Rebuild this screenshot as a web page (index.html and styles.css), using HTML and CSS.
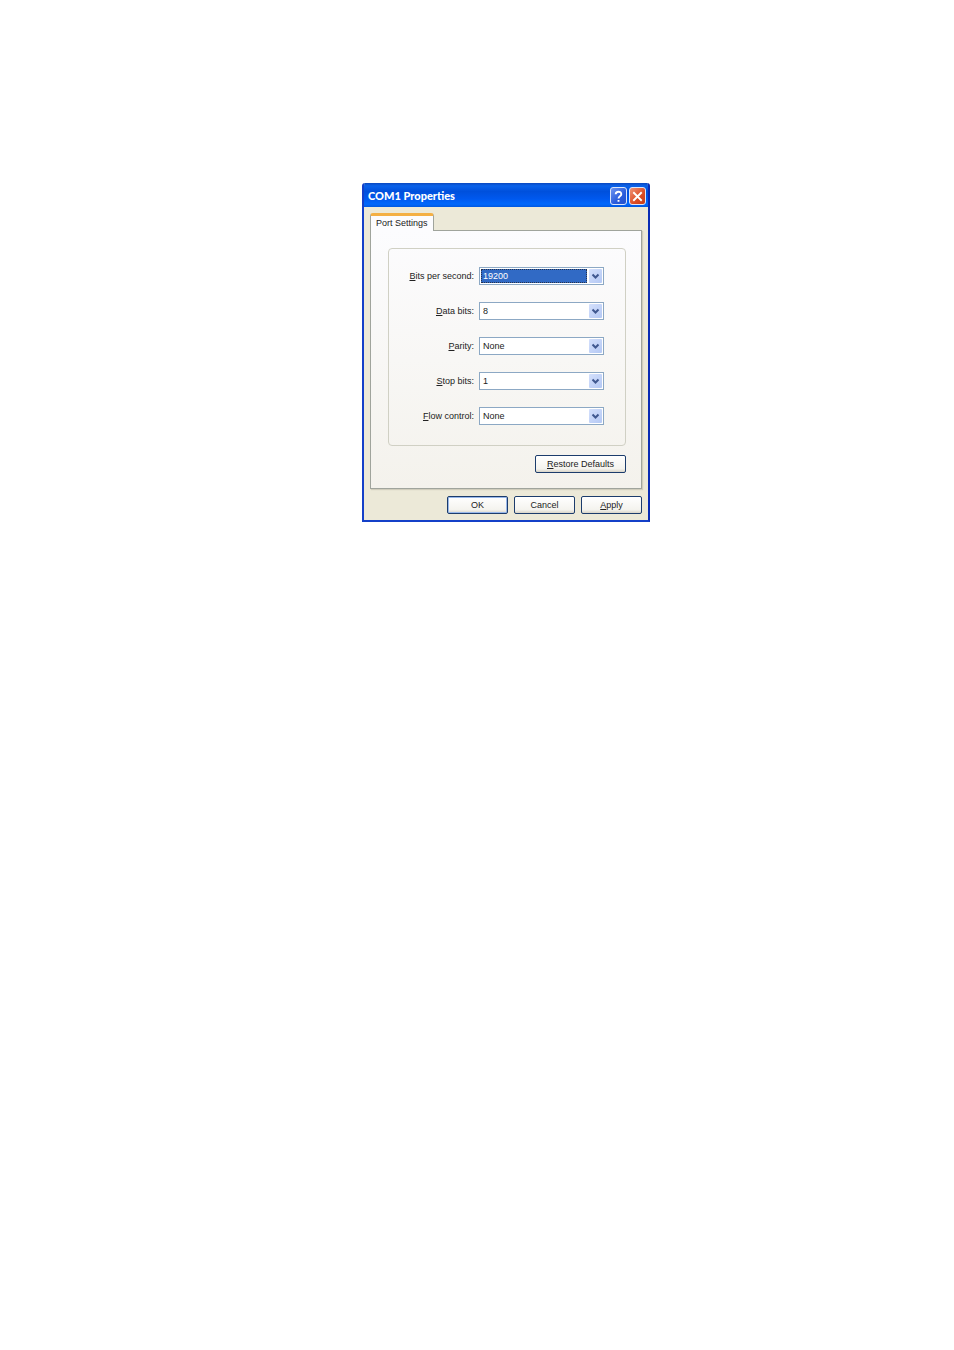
FILE: index.html
```html
<!DOCTYPE html>
<html lang="en">
<head>
  <meta charset="UTF-8" />
  <meta name="viewport" content="width=device-width, initial-scale=1.0" />
  <title>COM1 Properties</title>
  <link rel="stylesheet" href="styles.css">
</head>
<body>
  <form class="dialog">
    <header class="titlebar">
      <h1>COM1 Properties</h1>
      <button type="button" class="caption help" aria-label="Help">
        <svg viewBox="0 0 16 16"><path d="M5 5.6C5 2 11 2 11 5.5C11 7.8 8 7.6 8 10M8 11.6V13.6" /></svg>
      </button>
      <button type="button" class="caption close" aria-label="Close">
        <svg viewBox="0 0 16 16"><path d="M3.5 3.5L12.5 12.5M12.5 3.5L3.5 12.5" /></svg>
      </button>
    </header>

    <main class="content">
      <div class="tabs">
        <button type="button" class="tab">Port Settings</button>
      </div>

      <section class="panel">
        <div class="group">
          <label for="bits"><u>B</u>its per second:</label>
          <div class="combo active">
            <select id="bits"><option>19200</option></select>
            <svg class="arrow" viewBox="0 0 13 13"><path d="M3.5 5L6.5 8L9.5 5" /></svg>
          </div>

          <label for="data"><u>D</u>ata bits:</label>
          <div class="combo">
            <select id="data"><option>8</option></select>
            <svg class="arrow" viewBox="0 0 13 13"><path d="M3.5 5L6.5 8L9.5 5" /></svg>
          </div>

          <label for="parity"><u>P</u>arity:</label>
          <div class="combo">
            <select id="parity"><option>None</option></select>
            <svg class="arrow" viewBox="0 0 13 13"><path d="M3.5 5L6.5 8L9.5 5" /></svg>
          </div>

          <label for="stop"><u>S</u>top bits:</label>
          <div class="combo">
            <select id="stop"><option>1</option></select>
            <svg class="arrow" viewBox="0 0 13 13"><path d="M3.5 5L6.5 8L9.5 5" /></svg>
          </div>

          <label for="flow"><u>F</u>low control:</label>
          <div class="combo">
            <select id="flow"><option>None</option></select>
            <svg class="arrow" viewBox="0 0 13 13"><path d="M3.5 5L6.5 8L9.5 5" /></svg>
          </div>
        </div>
        <button type="button" class="btn restore"><span><u>R</u>estore Defaults</span></button>
      </section>

      <footer class="actions">
        <button type="button" class="btn default">OK</button>
        <button type="button" class="btn">Cancel</button>
        <button type="button" class="btn"><span><u>A</u>pply</span></button>
      </footer>
    </main>
  </form>
</body>
</html>
```
FILE: styles.css
```css
* {
  box-sizing: border-box;
}

body {
  margin: 0;
  padding: 183px 16px 40px 362px;
  background: #fff;
  color: #222;
  font-family: "Liberation Sans", Arial, sans-serif;
  font-size: 9px;
  line-height: 12px;
}

button, select {
  font: inherit;
  color: inherit;
}

.dialog {
  width: 100%;
  max-width: 288px;
  border: 2px solid #1440c8;
  border-top: none;
  border-right-color: #0a2cb4;
  border-radius: 3px 3px 0 0;
  background: #ece9d8;
  overflow: hidden;
}

.titlebar {
  display: flex;
  align-items: center;
  gap: 2px;
  height: 24px;
  padding: 2px 2px 0 4px;
  background: linear-gradient(#0a48c0, #0a62ea 12%, #0050dc 35%, #0058ee 65%, #0068fc 88%, #0058e0);
}

.titlebar h1 {
  flex: 1;
  margin: 0;
  color: #fff;
  font-family: Lato, "Open Sans", sans-serif;
  font-size: 11px;
  font-weight: 900;
  line-height: 16px;
}

.caption {
  width: 17px;
  height: 18px;
  padding: 0;
  border: 1px solid #dce6fa;
  border-radius: 3px;
}

.caption svg {
  display: block;
  width: 100%;
  fill: none;
  stroke: #fff;
  stroke-width: 2;
}

.help {
  background: linear-gradient(135deg, #6d94f0, #2a5cdc 60%, #2452cc);
}

.close {
  background: linear-gradient(135deg, #f09478, #dc4c24 60%, #c83c18);
}

.content {
  padding: 6px;
}

.tabs {
  display: flex;
}

.tab {
  height: 18px;
  margin-bottom: -1px;
  padding: 0 5px;
  border: 1px solid #a0a49c;
  border-top: 3px solid #f4b044;
  border-bottom: none;
  border-radius: 3px 3px 0 0;
  background: #fcfcfe;
  line-height: 11px;
  z-index: 1;
}

.panel {
  display: flex;
  flex-direction: column;
  padding: 17px 15px 15px 17px;
  border: 1px solid #a0a49c;
  background: linear-gradient(#fcfcfe, #f4f2ec);
  box-shadow: 1px 1px 1px #d0cdbc;
}

.group {
  display: grid;
  grid-template-columns: 1fr 125px;
  align-items: center;
  gap: 17px 5px;
  padding: 18px 21px 20px 16px;
  border: 1px solid #d0d0c4;
  border-radius: 4px;
}

.group label {
  text-align: right;
  white-space: nowrap;
}

.combo {
  display: flex;
  height: 18px;
  border: 1px solid #8ca8c4;
  background: #fff;
}

.combo select {
  flex: 1;
  min-width: 0;
  margin: 1px;
  padding: 1px 2px;
  border: none;
  border-radius: 0;
  background: transparent;
  appearance: none;
}

.combo.active select {
  outline: 1px dotted #26324c;
  outline-offset: -1px;
  background: #316ac5;
  color: #fff;
}

.arrow {
  width: 13px;
  height: 14px;
  margin: 1px;
  border-radius: 1px;
  background: linear-gradient(135deg, #d4e0fc, #b4c8f4);
  fill: none;
  stroke: #405890;
  stroke-width: 2;
}

.btn {
  width: 61px;
  height: 18px;
  padding: 0;
  border: 1px solid #1c3c6c;
  border-radius: 2px;
  background: linear-gradient(#fff, #f4f3ee 80%, #d8d4c8);
}

.btn.default {
  box-shadow: inset 0 0 0 1px #98b8ea;
}

.btn.restore {
  align-self: flex-end;
  width: 91px;
  margin-top: 9px;
}

.actions {
  display: flex;
  justify-content: flex-end;
  gap: 6px;
  margin-top: 7px;
}
```
